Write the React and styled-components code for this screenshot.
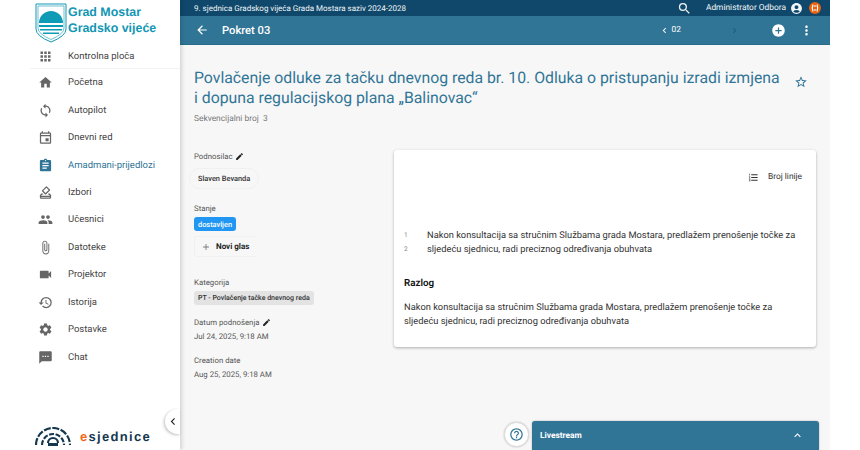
import React from 'react';
import styled, { createGlobalStyle } from 'styled-components';
import {
  MdApps, MdHome, MdSync, MdOutlineEvent, MdAssignment, MdOutlineHowToVote, MdPeople,
  MdAttachFile, MdVideocam, MdHistory, MdSettings, MdSms, MdSearch, MdAccountCircle,
  MdAddCircle, MdMoreVert, MdArrowBack, MdChevronLeft, MdChevronRight, MdStarBorder,
  MdEdit, MdAdd, MdFormatListNumbered, MdHelpOutline, MdExpandLess,
} from 'react-icons/md';

const GlobalStyle = createGlobalStyle`
  html, body { margin: 0; padding: 0; background: #fff; }
  body {
    font-family: Roboto, "Noto Sans", sans-serif;
    text-rendering: geometricPrecision;
    overflow: hidden;
  }
  * { box-sizing: border-box; }
`;

const Page = styled.div`
  position: relative;
  display: flex;
  width: 830px;
  height: 450px;
  overflow: hidden;
`;

const Sidebar = styled.aside`
  width: 180px;
  flex: none;
  display: flex;
  flex-direction: column;
  background: #fff;
  box-shadow: 2px 0 4px rgba(0, 0, 0, 0.14);
  z-index: 2;
`;

const Brand = styled.div`
  height: 45px;
  display: flex;
  align-items: flex-start;
  gap: 1px;
  padding: 3px 0 0 35px;
`;

const BrandText = styled.div`
  font-family: "Liberation Sans", Arial, sans-serif;
  font-weight: 700;
  font-size: 12.4px;
  line-height: 15.5px;
  color: #1196b3;
  padding-top: 2px;
`;

const DashboardRow = styled.div`
  height: 24px;
  margin-left: 30px;
  border-bottom: 1px solid #f2f2f2;
`;

const NavRow = styled.div`
  height: 27.45px;
  display: flex;
  align-items: center;
  padding-left: 38px;
  font-size: 9.5px;
  color: ${p => (p.$active ? '#317596' : '#444')};
  svg {
    flex: none;
    width: 15px;
    height: 15px;
    margin-right: 15px;
    color: ${p => (p.$active ? '#317596' : '#666')};
  }
`;

const DashLink = styled(NavRow)`
  height: 23px;
  padding-left: 8px;
`;

const SidebarFoot = styled.div`
  margin-top: auto;
  height: 28px;
  display: flex;
  align-items: flex-start;
  gap: 9px;
  padding: 5px 0 0 35px;
`;

const LogoWord = styled.div`
  font-family: "Liberation Sans", Arial, sans-serif;
  font-weight: 700;
  font-size: 13px;
  letter-spacing: 1.3px;
  color: #16384f;
  padding-top: 2px;
  span { color: #f26a1b; }
`;

const CollapseButton = styled.div`
  position: absolute;
  left: 165px;
  top: 409px;
  width: 15px;
  height: 25px;
  background: #fff;
  border-radius: 13px 0 0 13px;
  box-shadow: -1px 1px 3px rgba(0, 0, 0, 0.25);
  display: flex;
  align-items: center;
  justify-content: center;
  z-index: 3;
  color: #222;
  svg { width: 15px; height: 15px; margin-left: 1px; }
`;

const Main = styled.main`
  flex: 1;
  min-width: 0;
  display: flex;
  flex-direction: column;
  background: #f7f7f7;
`;

const TopBar = styled.div`
  height: 16px;
  flex: none;
  display: flex;
  align-items: center;
  padding: 0 9px 0 14px;
  background: #10486b;
  color: #f1f5f7;
  font-size: 8.4px;
  white-space: nowrap;
`;

const SessionName = styled.span`
  font-size: 8px;
`;

const TopBarRight = styled.div`
  margin-left: auto;
  display: flex;
  align-items: center;
  svg { display: block; flex: none; }
`;

const SearchIcon = styled(MdSearch)`
  width: 15px;
  height: 15px;
  margin-right: 14px;
`;

const UserName = styled.span`
  margin-right: 4px;
`;

const OrangeBadge = styled.svg`
  width: 12px;
  height: 12px;
  margin-left: 6px;
`;

const SubBar = styled.div`
  height: 29px;
  flex: none;
  display: flex;
  align-items: center;
  padding: 0 16px 0 15px;
  background: #317596;
  border-bottom: 1px solid #2a6a89;
  color: #fff;
  svg { flex: none; }
`;

const BackIcon = styled(MdArrowBack)`
  width: 14px;
  height: 14px;
  margin-right: 13px;
`;

const SubTitle = styled.div`
  font-size: 11.2px;
  font-weight: 500;
  white-space: nowrap;
`;

const Pager = styled.div`
  display: flex;
  align-items: center;
  margin-left: auto;
  font-size: 8.4px;
  svg { width: 11px; height: 11px; }
`;

const PagerNext = styled(MdChevronRight)`
  margin-left: 48px;
  color: #1f5a78;
`;

const PagerNumber = styled.span`
  margin-left: 2px;
`;

const AddIcon = styled(MdAddCircle)`
  width: 15px;
  height: 15px;
  margin-left: 31px;
`;

const MoreIcon = styled(MdMoreVert)`
  width: 15px;
  height: 15px;
  margin-left: 13px;
`;

const Content = styled.div`
  flex: 1;
  display: flex;
  flex-direction: column;
  padding: 23px 14px 0;
`;

const TitleRow = styled.div`
  display: flex;
  align-items: flex-start;
`;

const Title = styled.h1`
  margin: 0;
  width: 589px;
  font-size: 15.8px;
  line-height: 20px;
  font-weight: 400;
  color: #317596;
`;

const StarIcon = styled(MdStarBorder)`
  flex: none;
  width: 14px;
  height: 14px;
  margin: 7px 0 0 11px;
  color: #317596;
`;

const Sequence = styled.div`
  height: 12px;
  line-height: 12px;
  margin-top: 5px;
  font-size: 8.4px;
  color: #777;
`;

const Columns = styled.div`
  display: flex;
  margin-top: 25px;
`;

const MetaColumn = styled.div`
  width: 200px;
  flex: none;
`;

const MetaLabel = styled.div`
  display: flex;
  align-items: center;
  gap: 2px;
  height: 12px;
  margin-top: ${p => p.$top || 0}px;
  font-size: 7.8px;
  color: #555;
  svg { width: 9px; height: 9px; color: #222; }
`;

const PersonChip = styled.div`
  display: flex;
  align-items: center;
  width: fit-content;
  height: 21px;
  margin: 6px 0 13px -5px;
  padding: 0 8px;
  border: 1px solid #f0f0f0;
  border-radius: 11px;
  font-size: 7.4px;
  font-weight: 500;
  color: #333;
`;

const StateChip = styled.div`
  width: 42px;
  height: 14px;
  margin-top: 3px;
  display: flex;
  align-items: center;
  justify-content: center;
  border-radius: 3px;
  background: #2196f3;
  color: #fff;
  font-size: 7.4px;
  font-weight: 500;
`;

const VoteButton = styled.div`
  width: 63px;
  height: 21px;
  margin-top: 5px;
  display: flex;
  align-items: center;
  padding-left: 6px;
  border-radius: 3px 0 0 3px;
  border-top: 1px solid #f0f0f0;
  border-left: 1px solid #f0f0f0;
  border-bottom: 1px solid #f0f0f0;
  font-size: 8px;
  font-weight: 700;
  color: #222;
  svg { width: 10px; height: 10px; margin-right: 5px; color: #777; }
`;

const CategoryChip = styled.div`
  display: flex;
  align-items: center;
  width: fit-content;
  height: 14px;
  margin: 3px 0 11px;
  padding: 0 4px;
  border-radius: 3px;
  background: #e3e3e3;
  font-size: 7px;
  font-weight: 500;
  color: #333;
`;

const MetaValue = styled.div`
  margin: 3px 0 11px;
  font-size: 7.8px;
  line-height: 12px;
  color: #555;
`;

const Card = styled.section`
  width: 422px;
  height: 197px;
  flex: none;
  padding: 21px 14px 0 10px;
  background: #fff;
  border-radius: 3px;
  box-shadow: 0 1px 3px rgba(0, 0, 0, 0.3);
`;

const LineToggle = styled.div`
  display: flex;
  justify-content: flex-end;
  align-items: center;
  height: 12px;
  font-size: 8.4px;
  color: #333;
  svg { width: 11px; height: 11px; margin-right: 9px; }
`;

const Lines = styled.div`
  margin-top: 45px;
`;

const Line = styled.div`
  display: flex;
  height: 14px;
  align-items: center;
  font-size: 9.3px;
  white-space: nowrap;
  color: #333;
`;

const LineNumber = styled.span`
  width: 23px;
  flex: none;
  font-size: 6.5px;
  color: #888;
`;

const ReasonTitle = styled.h3`
  margin: 21px 0 0;
  font-size: 9.8px;
  line-height: 14px;
  font-weight: 600;
  color: #111;
`;

const ReasonText = styled.p`
  margin: 10px 0 0;
  font-size: 9.3px;
  line-height: 14px;
  white-space: nowrap;
  color: #333;
`;

const HelpButton = styled.div`
  position: absolute;
  left: 504px;
  top: 422px;
  width: 25px;
  height: 25px;
  border-radius: 50%;
  background: #fff;
  border: 1px solid #ddd;
  box-shadow: 0 0 2px rgba(0, 0, 0, 0.25);
  display: flex;
  align-items: center;
  justify-content: center;
  color: #317596;
  svg { width: 15px; height: 15px; }
`;

const Livestream = styled.div`
  position: absolute;
  left: 532px;
  top: 421px;
  width: 287px;
  height: 29px;
  display: flex;
  align-items: center;
  justify-content: space-between;
  padding: 0 15px 0 8px;
  background: #317596;
  border-radius: 3px 3px 0 0;
  box-shadow: 0 0 2px rgba(0, 0, 0, 0.3);
  color: #fff;
  font-size: 8.4px;
  font-weight: 700;
  svg { width: 13px; height: 13px; }
`;

const navItems = [
  { label: 'Početna', Icon: MdHome },
  { label: 'Autopilot', Icon: MdSync },
  { label: 'Dnevni red', Icon: MdOutlineEvent },
  { label: 'Amadmani-prijedlozi', Icon: MdAssignment, active: true },
  { label: 'Izbori', Icon: MdOutlineHowToVote },
  { label: 'Učesnici', Icon: MdPeople },
  { label: 'Datoteke', Icon: MdAttachFile },
  { label: 'Projektor', Icon: MdVideocam },
  { label: 'Istorija', Icon: MdHistory },
  { label: 'Postavke', Icon: MdSettings },
  { label: 'Chat', Icon: MdSms },
];

const Shield = () => (
  <svg width="32" height="40" viewBox="0 0 32 40">
    <path d="M1 1 H31 V26 Q31 33 16 39 Q1 33 1 26 Z" fill="#fff" stroke="#1196b3" strokeWidth="1" />
    <path d="M3 3 H29 V25 Q29 31 16 36.5 Q3 31 3 25 Z" fill="#fff" stroke="#1196b3" strokeWidth="0.6" />
    <path d="M4 20 A12 12 0 0 1 28 20 Z" fill="#0f9ab5" />
    <path d="M4 22 H28 V24 H4 Z M5 26 H27 V27.5 H5 Z M8 29.5 H24 V31 H8 Z" fill="#0f9ab5" />
  </svg>
);

const EsjedniceMark = () => (
  <svg width="36" height="19" viewBox="0 0 36 19" fill="none" stroke="#16384f" strokeWidth="2.2">
    <path d="M1 18 A17 17 0 0 1 35 18" strokeDasharray="7 1.6" />
    <path d="M7 18 A11 11 0 0 1 29 18" strokeDasharray="5 1.6" />
    <path d="M13 16 A5 5 0 0 1 23 16" />
    <path d="M13 17.5 H23" strokeWidth="3" />
  </svg>
);

export default function App() {
  return (
    <Page>
      <GlobalStyle />
      <Sidebar>
        <Brand>
          <Shield />
          <BrandText>Grad Mostar<br />Gradsko vijeće</BrandText>
        </Brand>
        <DashboardRow>
          <DashLink><MdApps />Kontrolna ploča</DashLink>
        </DashboardRow>
        {navItems.map(({ label, Icon, active }) => (
          <NavRow key={label} $active={active}><Icon />{label}</NavRow>
        ))}
        <SidebarFoot>
          <EsjedniceMark />
          <LogoWord><span>e</span>sjednice</LogoWord>
        </SidebarFoot>
      </Sidebar>
      <CollapseButton><MdChevronLeft /></CollapseButton>
      <Main>
        <TopBar>
          <SessionName>9. sjednica Gradskog vijeća Grada Mostara saziv 2024-2028</SessionName>
          <TopBarRight>
            <SearchIcon />
            <UserName>Administrator Odbora</UserName>
            <MdAccountCircle size={13} />
            <OrangeBadge viewBox="0 0 12 12">
              <circle cx="6" cy="6" r="6" fill="#e9610f" />
              <path d="M4 2.5 Q2.6 6 4 9.5 M8 2.5 Q9.4 6 8 9.5" fill="none" stroke="#fff" strokeWidth="1.2" />
              <path d="M6 3 V5 M6 7 V9" fill="none" stroke="#fff" strokeWidth="1" />
            </OrangeBadge>
          </TopBarRight>
        </TopBar>
        <SubBar>
          <BackIcon />
          <SubTitle>Pokret 03</SubTitle>
          <Pager>
            <MdChevronLeft />
            <PagerNumber>02</PagerNumber>
            <PagerNext />
          </Pager>
          <AddIcon />
          <MoreIcon />
        </SubBar>
        <Content>
          <TitleRow>
            <Title>Povlačenje odluke za tačku dnevnog reda br. 10. Odluka o pristupanju izradi izmjena i dopuna regulacijskog plana „Balinovac“</Title>
            <StarIcon />
          </TitleRow>
          <Sequence>Sekvencijalni broj&nbsp; 3</Sequence>
          <Columns>
            <MetaColumn>
              <MetaLabel>Podnosilac <MdEdit /></MetaLabel>
              <PersonChip>Slaven Bevanda</PersonChip>
              <MetaLabel>Stanje</MetaLabel>
              <StateChip>dostavljen</StateChip>
              <VoteButton><MdAdd />Novi glas</VoteButton>
              <MetaLabel $top={19}>Kategorija</MetaLabel>
              <CategoryChip>PT - Povlačenje tačke dnevnog reda</CategoryChip>
              <MetaLabel>Datum podnošenja <MdEdit /></MetaLabel>
              <MetaValue>Jul 24, 2025, 9:18 AM</MetaValue>
              <MetaLabel>Creation date</MetaLabel>
              <MetaValue>Aug 25, 2025, 9:18 AM</MetaValue>
            </MetaColumn>
            <Card>
              <LineToggle><MdFormatListNumbered />Broj linije</LineToggle>
              <Lines>
                <Line><LineNumber>1</LineNumber>Nakon konsultacija sa stručnim Službama grada Mostara, predlažem prenošenje točke za</Line>
                <Line><LineNumber>2</LineNumber>sljedeću sjednicu, radi preciznog određivanja obuhvata</Line>
              </Lines>
              <ReasonTitle>Razlog</ReasonTitle>
              <ReasonText>Nakon konsultacija sa stručnim Službama grada Mostara, predlažem prenošenje točke za<br />sljedeću sjednicu, radi preciznog određivanja obuhvata</ReasonText>
            </Card>
          </Columns>
        </Content>
      </Main>
      <HelpButton><MdHelpOutline /></HelpButton>
      <Livestream>Livestream<MdExpandLess /></Livestream>
    </Page>
  );
}
